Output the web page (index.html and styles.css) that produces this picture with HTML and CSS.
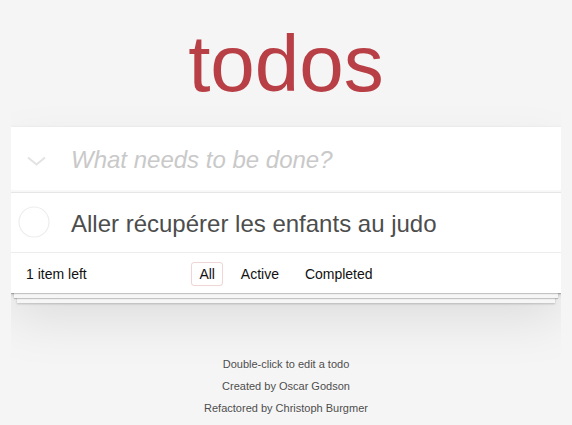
FILE: index.html
```html
<!DOCTYPE html>
<html lang="fr">
<head>
<meta charset="utf-8">
<title>todos</title>
<link rel="stylesheet" href="styles.css">
</head>
<body>
<section class="todoapp">
  <h1 class="title">todos</h1>
  <div class="card">
    <header class="header">
      <span class="toggle-all">
        <svg width="19" height="10" viewBox="0 0 19 10"><polyline points="1,1.5 9.5,8.5 18,1.5" fill="none" stroke="#e3e3e3" stroke-width="2"/></svg>
      </span>
      <input class="new-todo" placeholder="What needs to be done?">
    </header>
    <ul class="todo-list">
      <li class="todo">
        <span class="toggle">
          <svg width="32" height="32" viewBox="0 0 32 32"><circle cx="16" cy="16" r="15" fill="none" stroke="#ededed" stroke-width="1.2"/></svg>
        </span>
        <label class="todo-label">Aller récupérer les enfants au judo</label>
      </li>
    </ul>
    <footer class="footer">
      <span class="todo-count"><strong class="count">1</strong> item left</span>
      <ul class="filters">
        <li><a class="filter selected" href="#/">All</a></li>
        <li><a class="filter" href="#/active">Active</a></li>
        <li><a class="filter" href="#/completed">Completed</a></li>
      </ul>
      <span class="spacer"></span>
    </footer>
  </div>
</section>
<footer class="info">
  <p>Double-click to edit a todo</p>
  <p>Created by Oscar Godson</p>
  <p>Refactored by Christoph Burgmer</p>
</footer>
</body>
</html>
```

FILE: styles.css
```css
html {
  background: #f5f5f5;
}

body {
  font: 14px "Liberation Sans", Arial, sans-serif;
  line-height: 1.4em;
  background: #f5f5f5;
  color: #111111;
  max-width: 550px;
  min-width: 230px;
  margin: 0 auto;
}

.title {
  margin: 24px 0 23px;
  font-size: 80px;
  line-height: 80px;
  font-weight: 400;
  text-align: center;
  color: #b83f45;
}

.card {
  background: #fff;
  box-shadow: 0 2px 4px 0 rgba(0, 0, 0, 0.2), 0 25px 50px 0 rgba(0, 0, 0, 0.1);
}

.header {
  display: flex;
  align-items: center;
  height: 65px;
  box-shadow: inset 0 -2px 1px rgba(0, 0, 0, 0.03);
}

.toggle-all {
  width: 60px;
  box-sizing: border-box;
  padding-left: 16px;
  display: flex;
  align-items: center;
  padding-top: 3px;
}

.new-todo {
  flex: 1;
  min-width: 0;
  border: none;
  outline: none;
  background: transparent;
  padding: 0 16px 0 0;
  font: inherit;
  font-size: 24px;
  line-height: 1.4em;
  color: #4d4d4d;
}

.new-todo::placeholder {
  font-style: italic;
  color: #c9c9c9;
}

.todo-list {
  margin: 0;
  padding: 0;
  list-style: none;
  border-top: 1px solid #e6e6e6;
}

.todo {
  display: flex;
  align-items: center;
  font-size: 24px;
  border-bottom: 1px solid #ededed;
}

.toggle {
  width: 60px;
  box-sizing: border-box;
  padding-left: 7px;
  display: flex;
  align-items: center;
}

.todo-label {
  padding: 17px 15px 13px 0;
  line-height: 1.2;
  color: #4d4d4d;
}

.footer {
  display: grid;
  grid-template-columns: 1fr auto 1fr;
  align-items: center;
  padding: 12px 15px 8px;
  height: 20px;
  box-shadow: 0 1px 1px rgba(0, 0, 0, 0.2),
    0 8px 0 -3px #f6f6f6,
    0 9px 1px -3px rgba(0, 0, 0, 0.2),
    0 16px 0 -6px #f6f6f6,
    0 17px 2px -6px rgba(0, 0, 0, 0.2);
}

.todo-count {
  text-align: left;
}

.count {
  font-weight: 400;
}

.filters {
  margin: 0;
  padding: 0;
  list-style: none;
  white-space: nowrap;
}

.filters li {
  display: inline;
}

.filter {
  color: inherit;
  margin: 3px;
  padding: 3px 7px;
  text-decoration: none;
  border: 1px solid transparent;
  border-radius: 3px;
}

.filter.selected {
  border-color: rgba(175, 47, 47, 0.2);
}

.info {
  margin: 66px auto 0;
  color: #4d4d4d;
  font-size: 11px;
  text-shadow: 0 1px 0 rgba(255, 255, 255, 0.5);
  text-align: center;
}

.info p {
  line-height: 1;
  margin: 11px 0;
}
```
